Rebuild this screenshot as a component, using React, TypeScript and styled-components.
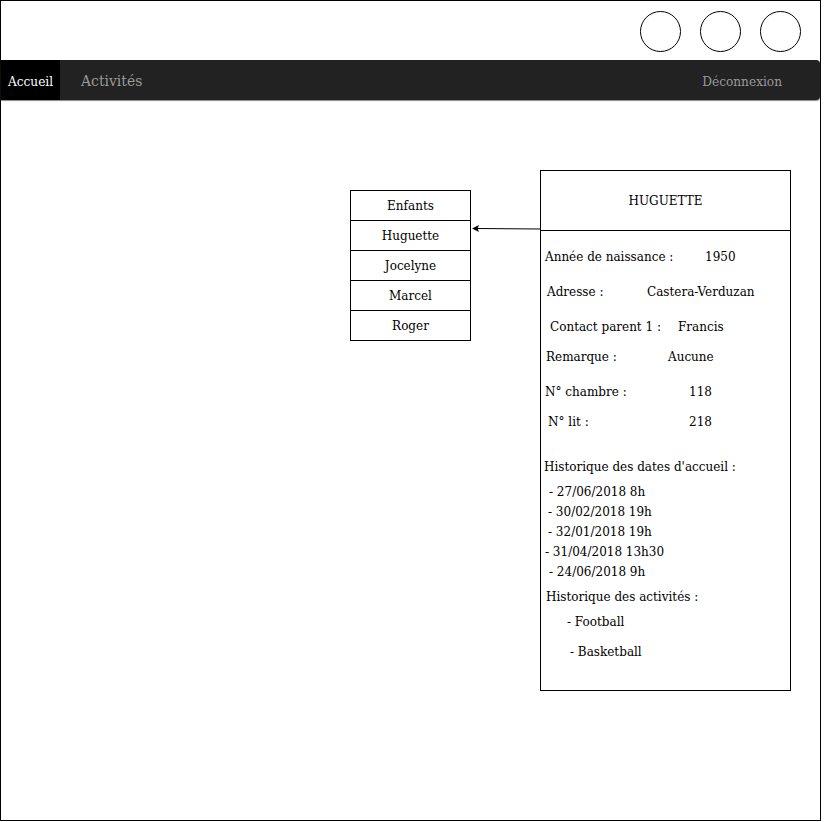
import React from "react";
import styled, { createGlobalStyle } from "styled-components";

const Global = createGlobalStyle`
  html, body { margin: 0; padding: 0; background: #fff; }
  body { font-family: "DejaVu Serif", "Liberation Serif", serif; color: #000; }
`;

const Frame = styled.div`
  width: 821px;
  height: 821px;
  box-sizing: border-box;
  border: 1px solid #000;
  display: flex;
  flex-direction: column;
`;

const TopBar = styled.div`
  height: 59px;
  display: flex;
  justify-content: flex-end;
  align-items: center;
  gap: 19px;
  padding-right: 19px;
  padding-top: 1px;
  box-sizing: border-box;
`;

const Circle = styled.div`
  width: 41px;
  height: 41px;
  box-sizing: border-box;
  border: 1px solid #000;
  border-radius: 50%;
`;

const Nav = styled.nav`
  height: 40px;
  background: #222;
  border-radius: 0 4px 4px 0;
  box-shadow: 0 1px 1px #888;
  display: flex;
  align-items: stretch;
  font-family: "DejaVu Serif Condensed", "DejaVu Serif", serif;
  font-stretch: condensed;
`;

const NavItem = styled.div<{ $active?: boolean; $size?: number; $pl?: number; $pr?: number }>`
  display: flex;
  align-items: center;
  justify-content: center;
  box-sizing: border-box;
  width: ${(p) => (p.$active ? "59px" : "auto")};
  padding-left: ${(p) => p.$pl ?? 0}px;
  padding-right: ${(p) => p.$pr ?? 0}px;
  padding-top: 1px;
  background: ${(p) => (p.$active ? "#000" : "transparent")};
  color: ${(p) => (p.$active ? "#fff" : "#9a9a9a")};
  font-size: ${(p) => p.$size ?? 13}px;
`;

const Spacer = styled.div`
  flex: 1;
`;

const Content = styled.main`
  flex: 1;
  display: flex;
  align-items: flex-start;
  padding-left: 349px;
`;

const Table = styled.div`
  margin-top: 90px;
  width: 121px;
  border: 1px solid #000;
  box-sizing: border-box;
  font-size: 12px;
`;

const Cell = styled.div`
  height: 30px;
  box-sizing: border-box;
  display: flex;
  align-items: center;
  justify-content: center;
  & + & {
    border-top: 1px solid #000;
  }
  &:first-child {
    height: 29px;
  }
`;

const Connector = styled.svg`
  margin-top: 122px;
  width: 69px;
  height: 12px;
  display: block;
`;

const Card = styled.section`
  margin-top: 70px;
  width: 251px;
  height: 521px;
  box-sizing: border-box;
  border: 1px solid #000;
  font-size: 12px;
`;

const CardHeader = styled.div`
  height: 59px;
  border-bottom: 1px solid #000;
  display: flex;
  align-items: center;
  justify-content: center;
`;

const CardBody = styled.div`
  display: flex;
  flex-direction: column;
`;

const Line = styled.div<{ $gap: number; $indent: number }>`
  height: 20px;
  line-height: 20px;
  margin-top: ${(p) => p.$gap}px;
  padding-left: ${(p) => p.$indent}px;
  display: flex;
  white-space: nowrap;
`;

const Label = styled.span<{ $w?: number }>`
  display: inline-block;
  width: ${(p) => (p.$w ? `${p.$w}px` : "auto")};
`;

type Row = { gap: number; x: number; label: string; value?: string; vx?: number };

const rows: Row[] = [
  { gap: 16, x: 545, label: "Année de naissance :", value: "1950", vx: 705 },
  { gap: 15, x: 547, label: "Adresse :", value: "Castera-Verduzan", vx: 647 },
  { gap: 15, x: 550, label: "Contact parent 1 :", value: "Francis", vx: 678 },
  { gap: 10, x: 546, label: "Remarque :", value: "Aucune", vx: 668 },
  { gap: 15, x: 545, label: "N° chambre :", value: "118", vx: 689 },
  { gap: 10, x: 548, label: "N° lit :", value: "218", vx: 689 },
  { gap: 25, x: 544, label: "Historique des dates d'accueil :" },
  { gap: 5, x: 549, label: "- 27/06/2018 8h" },
  { gap: 0, x: 548, label: "- 30/02/2018 19h" },
  { gap: 0, x: 548, label: "- 32/01/2018 19h" },
  { gap: 0, x: 545, label: "- 31/04/2018 13h30" },
  { gap: 0, x: 549, label: "- 24/06/2018 9h" },
  { gap: 5, x: 546, label: "Historique des activités :" },
  { gap: 5, x: 567, label: "- Football" },
  { gap: 10, x: 570, label: "- Basketball" },
];

const children = ["Enfants", "Huguette", "Jocelyne", "Marcel", "Roger"];

export default function App() {
  return (
    <>
      <Global />
      <Frame>
        <TopBar>
          <Circle />
          <Circle />
          <Circle />
        </TopBar>
        <Nav>
          <NavItem $active $size={13.5}>Accueil</NavItem>
          <NavItem $size={15.5} $pl={21}>Activités</NavItem>
          <Spacer />
          <NavItem $size={13.5} $pr={38}>Déconnexion</NavItem>
        </Nav>
        <Content>
          <Table>
            {children.map((c) => (
              <Cell key={c}>{c}</Cell>
            ))}
          </Table>
          <Connector viewBox="0 0 69 12">
            <line x1="6" y1="6.5" x2="69" y2="7" stroke="#000" strokeWidth="1" />
            <path d="M1 6.5 L8 3 L6.5 6.5 L8 10 Z" fill="#000" />
          </Connector>
          <Card>
            <CardHeader>HUGUETTE</CardHeader>
            <CardBody>
              {rows.map((r, i) => (
                <Line key={i} $gap={r.gap} $indent={r.x - 541}>
                  <Label $w={r.vx ? r.vx - r.x : undefined}>{r.label}</Label>
                  {r.value && <span>{r.value}</span>}
                </Line>
              ))}
            </CardBody>
          </Card>
        </Content>
      </Frame>
    </>
  );
}
